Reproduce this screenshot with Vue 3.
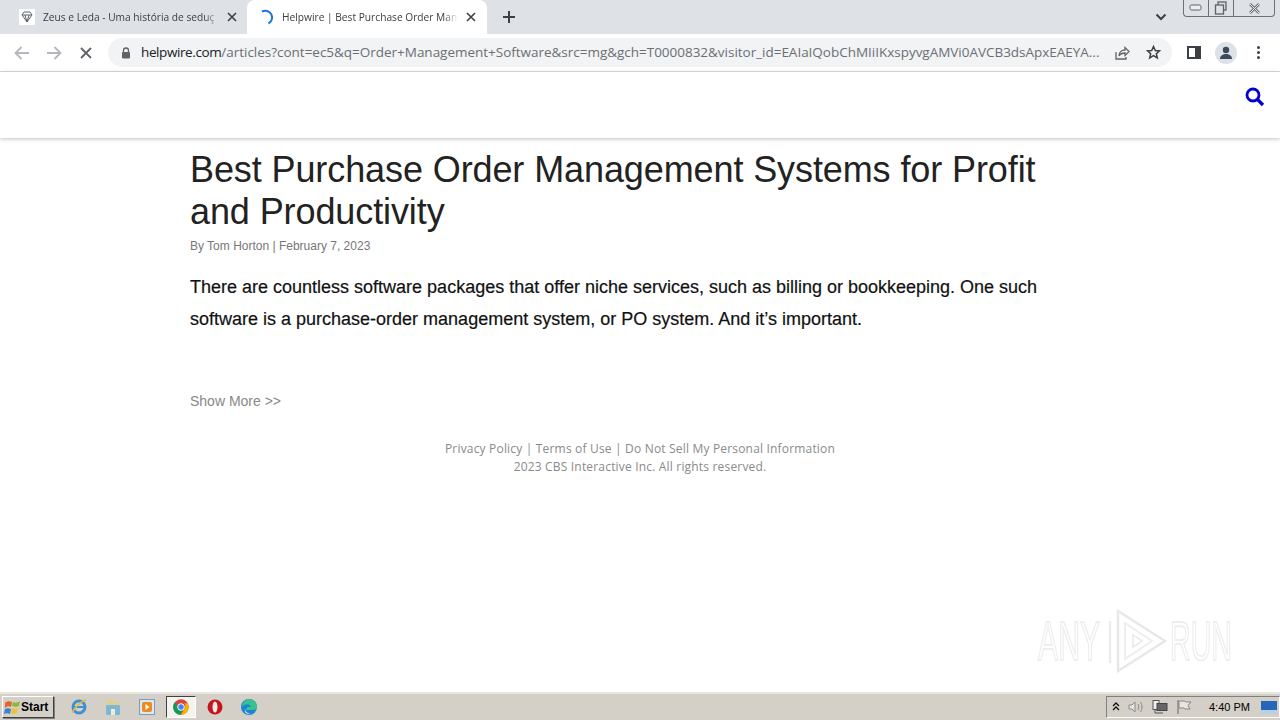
<script setup>
const url = 'articles?cont=ec5&q=Order+Management+Software&src=mg&gch=T0000832&visitor_id=EAIaIQobChMIiIKxspyvgAMVi0AVCB3dsApxEAEYA...'
</script>

<template>
  <div class="screen">
    <div class="tabstrip">
      <div class="tab inactive">
        <svg class="fav" width="16" height="16" viewBox="0 0 16 16"><rect width="16" height="16" fill="#fff"/><path d="M3 6l2-3h6l2 3-5 7z M3 6h10 M6 6l2 7 2-7" fill="none" stroke="#5f6368" stroke-width="1"/></svg>
        <span class="tabtitle">Zeus e Leda - Uma história de seduç</span>
        <svg class="tabx" width="10" height="10" viewBox="0 0 10 10"><path d="M1 1l8 8M9 1l-8 8" stroke="#3c4043" stroke-width="1.6"/></svg>
      </div>
      <div class="tab active">
        <svg class="fav" width="16" height="16" viewBox="0 0 16 16"><path d="M2 2.500a6.500 6.500 0 0 1 6.500 12" fill="none" stroke="#1a73e8" stroke-width="2"/></svg>
        <span class="tabtitle">Helpwire | Best Purchase Order Man</span>
        <svg class="tabx" width="10" height="10" viewBox="0 0 10 10"><path d="M1 1l8 8M9 1l-8 8" stroke="#3c4043" stroke-width="1.6"/></svg>
      </div>
      <svg class="plus" width="14" height="14" viewBox="0 0 14 14"><path d="M7 1v12M1 7h12" stroke="#3c4043" stroke-width="2"/></svg>
      <div class="spacer"></div>
      <svg class="chev" width="12" height="8" viewBox="0 0 12 8"><path d="M1.500 1.500L6 6l4.500-4.500" fill="none" stroke="#3c4043" stroke-width="2"/></svg>
      <div class="winbtns">
        <div class="wb"><svg width="14" height="8" viewBox="0 0 14 8"><rect x="1" y="1" width="11" height="5" rx="1.500" fill="#eceef1" stroke="#5f6368"/></svg></div>
        <div class="wb"><svg width="14" height="14" viewBox="0 0 14 14"><rect x="4" y="1" width="8" height="8" fill="none" stroke="#5f6368" stroke-width="1.300"/><rect x="1.500" y="4" width="8" height="9" fill="#dee1e6" stroke="#5f6368" stroke-width="1.300"/></svg></div>
        <div class="wb wide"><svg width="13" height="11" viewBox="0 0 13 11"><path d="M2 1l9 9M11 1l-9 9" stroke="#6b7075" stroke-width="2.600"/><path d="M2 1l9 9M11 1l-9 9" stroke="#eceef1" stroke-width="1"/></svg></div>
      </div>
    </div>

    <div class="toolbar">
      <svg class="nav first" width="16" height="14" viewBox="0 0 16 14"><path d="M15 7H2M7.500 1L1.500 7l6 6" fill="none" stroke="#b4b7bb" stroke-width="1.800"/></svg>
      <svg class="nav" width="16" height="14" viewBox="0 0 16 14"><path d="M1 7h13M8.500 1l6 6-6 6" fill="none" stroke="#b4b7bb" stroke-width="1.800"/></svg>
      <svg class="nav stop" width="12" height="12" viewBox="0 0 12 12"><path d="M1 1l10 10M11 1L1 11" stroke="#5f6368" stroke-width="1.800"/></svg>
      <div class="omnibox">
        <svg class="lock" width="10" height="12" viewBox="0 0 10 12"><path d="M2.500 5V3.500a2.500 2.500 0 0 1 5 0V5" fill="none" stroke="#5f6368" stroke-width="1.300"/><rect x="1" y="5" width="8" height="6.500" rx="1" fill="#5f6368"/></svg>
        <span class="url"><span class="host">helpwire.com</span>/{{ url }}</span>
        <svg class="share" width="16" height="16" viewBox="0 0 16 16"><path d="M2 7v7h10v-2" fill="none" stroke="#5f6368" stroke-width="1.300"/><path d="M5 11c0-4 3-6 6-6V2.500l4 4-4 4V8c-3 0-5 1-6 3z" fill="none" stroke="#5f6368" stroke-width="1.300"/></svg>
        <svg class="star" width="15" height="15" viewBox="0 0 15 15"><path d="M7.500 1.500l1.800 4 4.200.4-3.200 2.800 1 4.200-3.800-2.300-3.800 2.300 1-4.200L1.500 5.900l4.200-.4z" fill="none" stroke="#3c4043" stroke-width="1.500"/></svg>
      </div>
      <svg class="panel" width="14" height="13" viewBox="0 0 14 13"><rect x="1" y="1" width="12" height="11" fill="none" stroke="#3c4043" stroke-width="2"/><rect x="8" y="1" width="5" height="11" fill="#3c4043"/></svg>
      <div class="avatar"><svg width="14" height="14" viewBox="0 0 14 14"><circle cx="7" cy="4" r="3.200" fill="#3c4a5e"/><path d="M1 13c0-3.500 3-5 6-5s6 1.500 6 5z" fill="#3c4a5e"/></svg></div>
      <div class="kebab"><i></i><i></i><i></i></div>
    </div>

    <header class="sitehead">
      <svg width="20" height="20" viewBox="0 0 20 20"><circle cx="8" cy="8" r="6" fill="none" stroke="#0000d0" stroke-width="2.800"/><path d="M12.500 12.500L18 18" stroke="#0000d0" stroke-width="3.200"/></svg>
    </header>

    <main class="page">
      <article class="article">
        <h1>Best Purchase Order Management Systems for Profit and Productivity</h1>
        <p class="byline">By Tom Horton | February 7, 2023</p>
        <p class="lead">There are countless software packages that offer niche services, such as billing or bookkeeping. One such software is a purchase-order management system, or PO system. And it’s important.</p>
        <p class="more">Show More &gt;&gt;</p>
      </article>
      <footer class="legal">
        <div>Privacy Policy | Terms of Use | Do Not Sell My Personal Information</div>
        <div>2023 CBS Interactive Inc. All rights reserved.</div>
      </footer>
      <div class="watermark">
        <span class="wm any">ANY</span>
        <svg class="wmlogo" width="60" height="64" viewBox="0 0 60 64"><path d="M10 2l47 30-47 30z" fill="none" stroke="#e8e8e8" stroke-width="2.500"/><path d="M17 14l27 18-27 18z" fill="none" stroke="#eeeeee" stroke-width="2"/><path d="M2 12v42" stroke="#ececec" stroke-width="2.500"/><path d="M25 26l9 6-9 6z" fill="none" stroke="#e8e8e8" stroke-width="1.500"/></svg>
        <span class="wm run">RUN</span>
      </div>
    </main>

    <div class="taskbar">
      <button class="start">
        <svg width="17" height="15" viewBox="0 0 17 15"><path d="M1 3c2-2 4-2 7-1L7 7C5 6 3 6 1 8z" fill="#e8632b"/><path d="M9 2c2 1 4 1 7-1l-1 5c-2 1-5 1-7 0z" fill="#8ab83a"/><path d="M1 9c2-1 4-1 6 0l-1 5c-2-1-4-1-6 0z" fill="#3d7fd0"/><path d="M8 8c2 1 4 1 6 0l-1 5c-2 1-4 1-6 0z" fill="#f2c230"/></svg>
        <span>Start</span>
      </button>
      <div class="apps">
        <div class="app"><svg width="18" height="18" viewBox="0 0 18 18"><circle cx="9" cy="9" r="6" fill="none" stroke="#3d8fd8" stroke-width="3"/><path d="M4 9h10" stroke="#3d8fd8" stroke-width="2"/><path d="M2 15C5 9 11 3 16 2" fill="none" stroke="#e8b93a" stroke-width="1.500"/></svg></div>
        <div class="app"><svg width="16" height="17" viewBox="0 0 16 17"><path d="M2 1h6l1 2h5v5H2z" fill="#e3cf8d"/><rect x="1" y="6" width="14" height="10" rx="1" fill="#7db7d6"/><rect x="6" y="10" width="4" height="6" fill="#f3eccd"/></svg></div>
        <div class="app"><svg width="16" height="16" viewBox="0 0 16 16"><rect x="0.500" y="0.500" width="15" height="15" fill="#dbe7f3" stroke="#7b9cc2"/><rect x="3" y="3" width="10" height="10" rx="2" fill="#ee8a1d"/><path d="M6.500 5l4 3-4 3z" fill="#fff"/></svg></div>
        <div class="app"><div class="pressed"><svg width="16" height="16" viewBox="0 0 48 48"><circle cx="24" cy="24" r="23" fill="#db4437"/><path d="M44 13a23 23 0 0 1-20 34l10-18a11 11 0 0 0 0-16z" fill="#f4b400"/><path d="M6 9l10 19a11 11 0 0 0 12 7l-5 12A23 23 0 0 1 6 9z" fill="#0f9d58"/><circle cx="24" cy="24" r="10" fill="#4285f4" stroke="#fff" stroke-width="3"/></svg></div></div>
        <div class="app"><svg width="16" height="16" viewBox="0 0 16 16"><circle cx="8" cy="8" r="7.500" fill="#c4161c"/><ellipse cx="8" cy="8" rx="2.500" ry="5.500" fill="#f7e8e8"/></svg></div>
        <div class="app"><svg width="18" height="18" viewBox="0 0 18 18"><circle cx="9" cy="9" r="8" fill="#1c84d0"/><path d="M9 1a8 8 0 0 1 8 8c0 2-2 3-4 3H6c0-3 3-4 5-3-1-3-5-4-9 0a8 8 0 0 1 7-8z" fill="#37c28f"/><path d="M5 11c0 3 3 5 6 4-3 2-7 0-6-4z" fill="#fff"/></svg></div>
      </div>
      <div class="spacer"></div>
      <div class="tray">
        <svg width="8" height="10" viewBox="0 0 8 10"><path d="M1 4l3-3 3 3M1 8l3-3 3 3" fill="none" stroke="#111" stroke-width="1.300"/></svg>
        <svg width="16" height="14" viewBox="0 0 16 14"><path d="M1 5h3l3-3v10L4 9H1z" fill="#e8e5de" stroke="#8a8a8a"/><path d="M10 4c1 2 1 4 0 6M12.500 2c2 3 2 7 0 10" fill="none" stroke="#8a8a8a"/></svg>
        <svg width="16" height="14" viewBox="0 0 16 14"><rect x="1" y="0.500" width="6" height="9" fill="#eee" stroke="#555"/><rect x="5" y="3.500" width="10" height="7" fill="#666" stroke="#444"/><path d="M3 10v3h8" fill="none" stroke="#555"/></svg>
        <svg width="16" height="14" viewBox="0 0 16 14"><path d="M2 0v14" stroke="#777" stroke-width="1.200"/><path d="M3 1h6l1 1h5l-3 3.500 2 3.500H9L8 8H3z" fill="#e8e5de" stroke="#888"/></svg>
        <span class="clock">4:40 PM</span>
        <svg width="16" height="13" viewBox="0 0 16 13"><rect width="16" height="13" fill="#2767b8"/><rect y="9" width="16" height="4" fill="#b8cfe6"/></svg>
      </div>
    </div>
  </div>
</template>

<style>
html, body { margin: 0; padding: 0; }
</style>

<style scoped>
.screen { width: 1280px; height: 720px; display: flex; flex-direction: column; overflow: hidden; background: #fff; font-family: "Liberation Sans", Arial, sans-serif; }
.spacer { flex: 1; }

.tabstrip { height: 34px; background: #dee1e6; display: flex; align-items: center; flex: none; }
.tab { height: 34px; box-sizing: border-box; display: flex; align-items: center; padding: 0 10px 0 19px; font: 10.200px "Open Sans", sans-serif; color: #3c4043; flex: none; }
.tab.inactive { width: 247px; }
.tab.active { width: 240px; background: #fff; border-radius: 8px 8px 0 0; margin-right: 15px; padding-left: 13px; }
.fav { flex: none; margin-right: 8px; }
.tab.active .fav { margin-right: 6px; }
.tabtitle { flex: 1; white-space: nowrap; min-width: 0; -webkit-mask-image: linear-gradient(to right, #000 92%, transparent); mask-image: linear-gradient(to right, #000 92%, transparent); }
.tabx { flex: none; margin-left: 8px; }
.tab.active .tabx { margin-right: 1px; }
.plus { flex: none; }
.chev { margin-right: 16px; }
.winbtns { display: flex; align-self: flex-start; height: 16px; border: 1px solid #6d7177; border-top: none; border-radius: 0 0 4px 4px; margin-right: 5px; }
.wb { width: 24px; display: flex; align-items: center; justify-content: center; border-right: 1px solid #6d7177; }
.wb.wide { width: 40px; border-right: none; }

.toolbar { height: 37px; flex: none; display: flex; align-items: center; background: #fff; border-bottom: 1px solid #dadce0; }
.nav { flex: none; }
.nav.first { margin-left: 14px; margin-right: 16px; }
.nav.stop { margin-left: 18px; margin-right: 16px; }
.omnibox { width: 1064px; height: 29px; border-radius: 15px; background: #f1f3f4; display: flex; align-items: center; box-sizing: border-box; padding-left: 13px; flex: none; }
.lock { flex: none; margin-right: 10px; }
.url { width: 960px; flex: none; white-space: nowrap; overflow: hidden; padding-bottom: 2px; font: 13.500px "Open Sans", sans-serif; color: #6b6f74; letter-spacing: -0.020px; }
.host { color: #202124; letter-spacing: -0.400px; }
.share { flex: none; margin-left: 13px; }
.star { flex: none; margin-left: 16px; }
.panel { flex: none; margin-left: 15px; }
.avatar { width: 22px; height: 22px; border-radius: 50%; background: #dee1e6; display: flex; align-items: center; justify-content: center; margin-left: 14px; flex: none; }
.kebab { margin-left: 20px; display: flex; flex-direction: column; gap: 2px; flex: none; }
.kebab i { width: 3px; height: 3px; border-radius: 50%; background: #3c4043; display: block; }

.sitehead { height: 66px; flex: none; display: flex; justify-content: flex-end; align-items: flex-start; padding: 15px 15px 0 0; box-shadow: 0 1px 4px rgba(0,0,0,.25); position: relative; box-sizing: border-box; }

.page { flex: 1; position: relative; min-height: 0; }
.article { width: 860px; margin-left: 190px; padding-top: 11px; }
h1 { margin: 0; font-size: 36px; line-height: 42px; font-weight: 400; color: #222; letter-spacing: -0.100px; }
.byline { margin: 4px 0 0; font-size: 12px; line-height: 18px; color: #777; }
.lead { margin: 16px 0 0; font-size: 18px; line-height: 32px; color: #111; -webkit-text-stroke: 0.200px #111; }
.more { margin: 56px 0 0; font-size: 14px; line-height: 20px; color: #888; }
.legal { margin-top: 29px; text-align: center; font: 12px/18px "Open Sans", sans-serif; color: #8a8a8a; letter-spacing: 0.180px; }

.watermark { position: absolute; left: 1038px; top: 471px; display: flex; align-items: center; font: 400 55px "Liberation Sans", sans-serif; line-height: 64px; color: #fff; }
.wm { display: inline-block; width: 62px; white-space: nowrap; transform-origin: 0 50%; -webkit-text-stroke: 2px #eeeeee; }
.any { transform: scaleX(.55); }
.run { transform: scaleX(.52); }
.wmlogo { margin: 0 2px 0 8px; flex: none; }

.taskbar { height: 28px; flex: none; background: #d4d0c8; border-top: 2px solid #e8e6e0; box-sizing: border-box; display: flex; align-items: center; }
.start { width: 52px; height: 22px; margin-left: 2px; padding: 0 0 0 1px; display: flex; align-items: center; gap: 0; background: #d4d0c8; border: 1px solid; border-color: #fff #404040 #404040 #fff; box-shadow: 1px 1px 0 #808080; font: 700 12px "Liberation Sans", sans-serif; color: #000; box-sizing: border-box; }
.apps { display: flex; margin-left: 8px; align-items: center; }
.app { width: 34px; height: 24px; display: flex; align-items: center; justify-content: center; box-sizing: border-box; }
.pressed { width: 30px; height: 22px; background: #f4f3f0; border: 1px solid; border-color: #404040 #fff #fff #404040; box-sizing: border-box; display: flex; align-items: center; justify-content: center; }
.tray { height: 22px; width: 174px; box-sizing: border-box; border: 1px solid; border-color: #808080 #fff #fff #808080; display: flex; align-items: center; padding: 0 0 0 5px; gap: 8px; }
.clock { font: 11px "Liberation Sans", sans-serif; color: #000; margin: 0 3px 0 9px; white-space: nowrap; }
</style>
